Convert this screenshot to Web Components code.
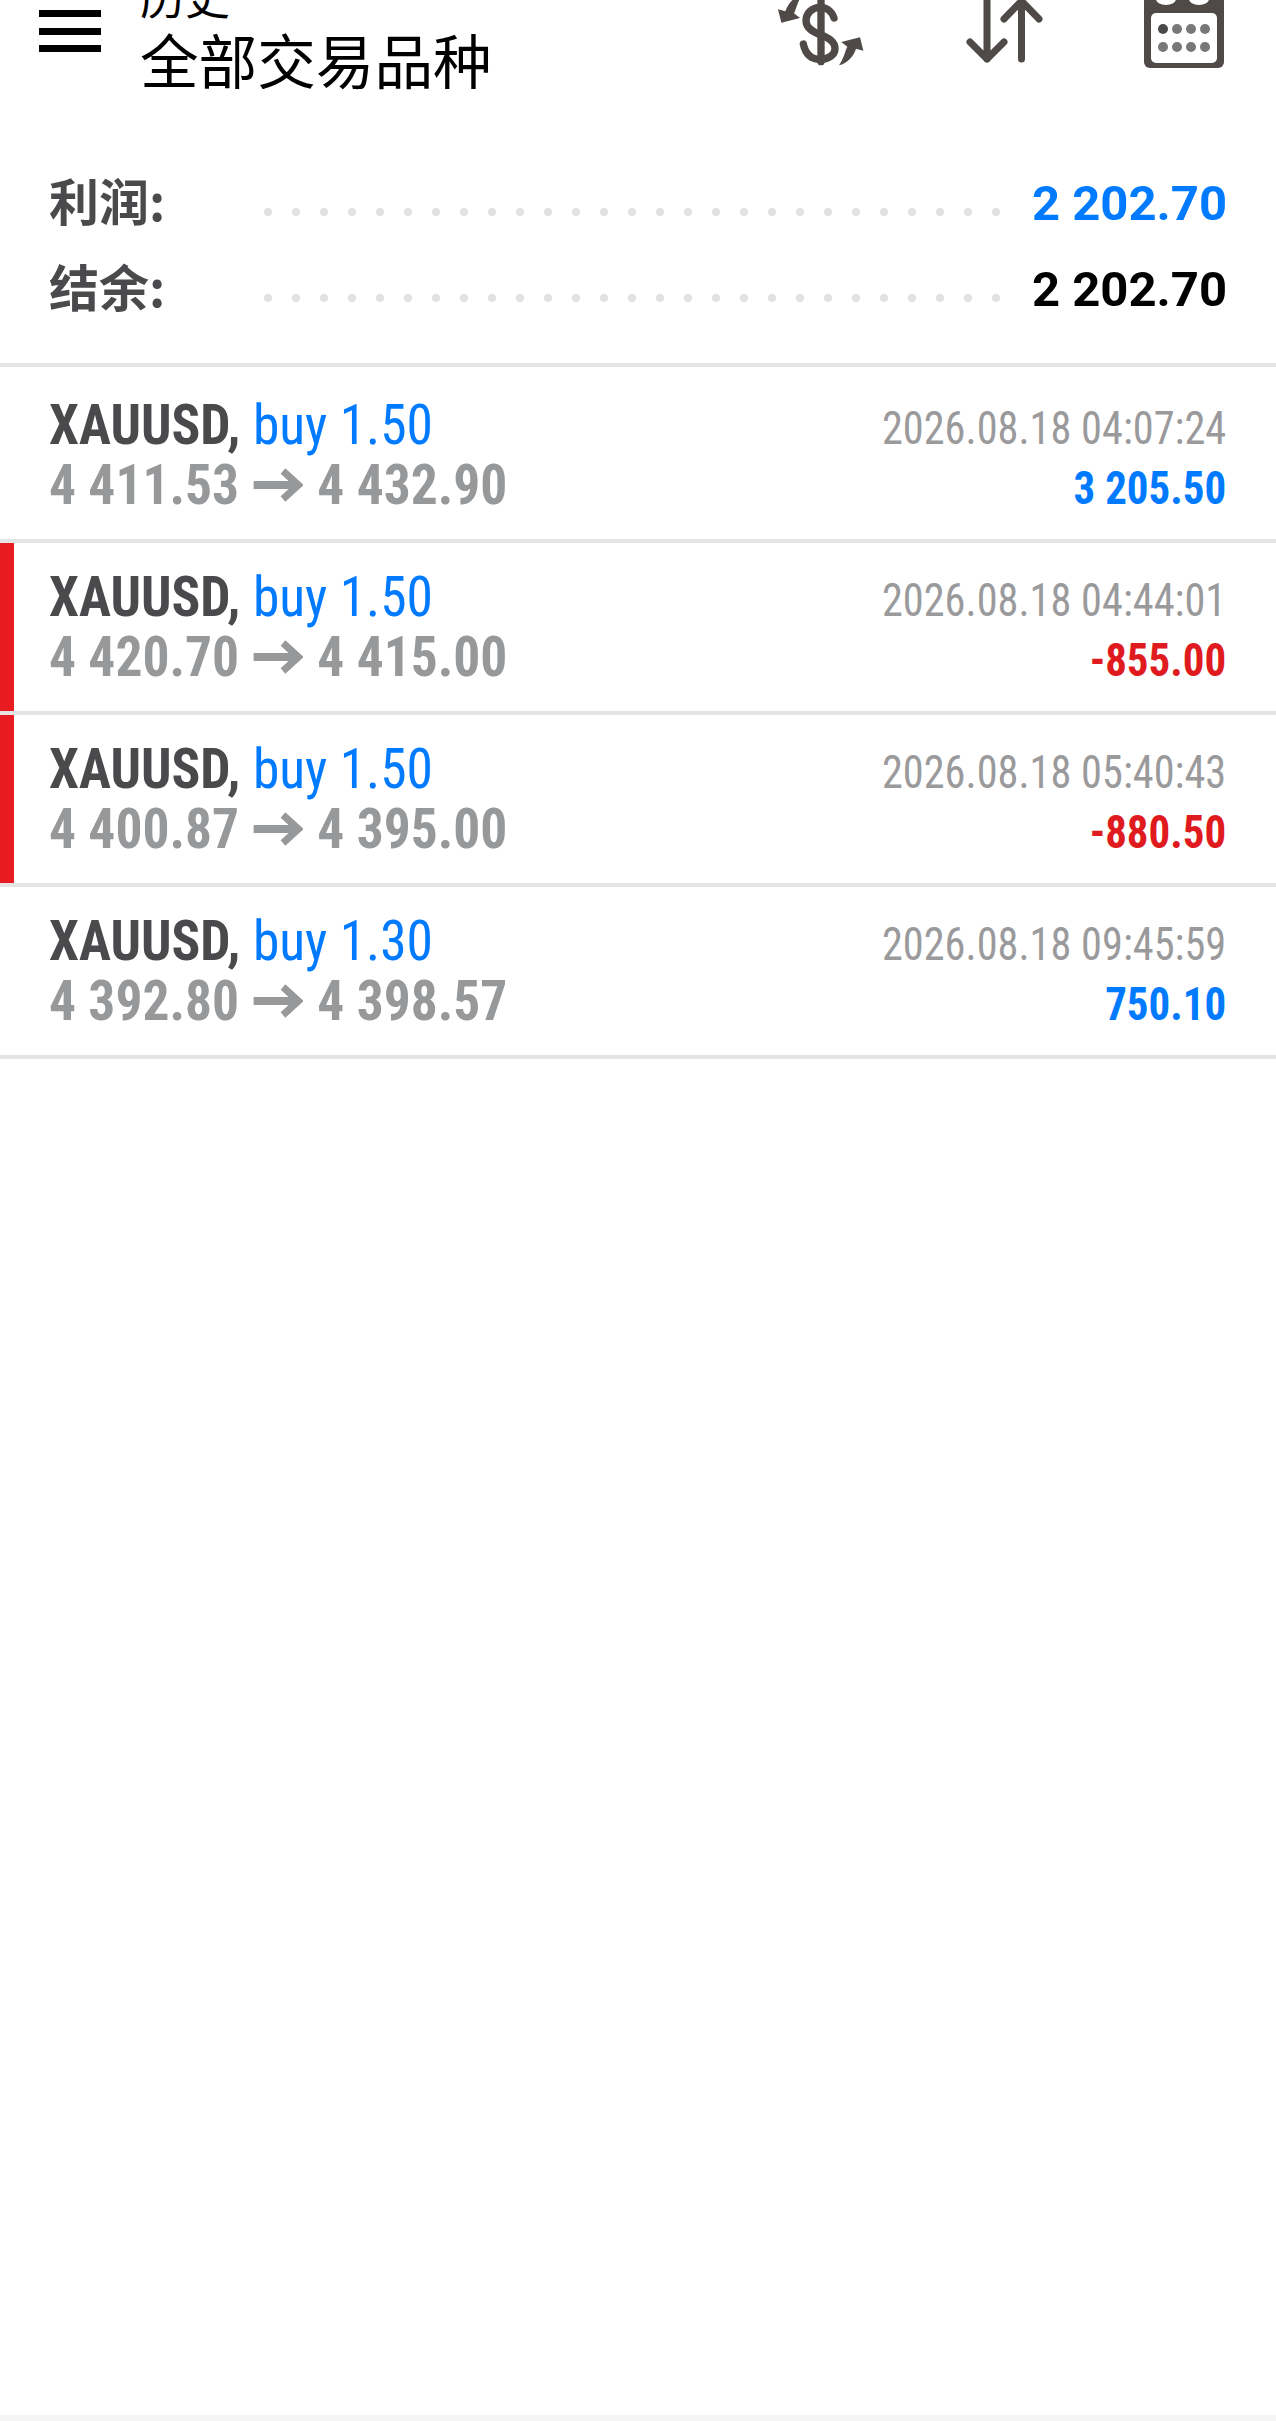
<!doctype html>
<html lang="zh">
<head>
<meta charset="utf-8">
<title>历史</title>
<style>
  html, body { margin: 0; height: 100%; background: #fff; }
  body { display: flex; flex-direction: column; height: 2421px; overflow: hidden; font-family: Roboto, "Noto Sans CJK SC", sans-serif; }
  history-list { flex: 1; }
</style>
</head>
<body>
<app-header></app-header>
<summary-panel>
  <summary-row label="利润:" value="2 202.70" tone="blue"></summary-row>
  <summary-row label="结余:" value="2 202.70"></summary-row>
</summary-panel>
<history-list>
  <trade-row class="first" symbol="XAUUSD," deal="buy 1.50" open="4 411.53" close="4 432.90" time="2026.08.18 04:07:24" profit="3 205.50"></trade-row>
  <trade-row symbol="XAUUSD," deal="buy 1.50" open="4 420.70" close="4 415.00" time="2026.08.18 04:44:01" profit="-855.00" loss></trade-row>
  <trade-row symbol="XAUUSD," deal="buy 1.50" open="4 400.87" close="4 395.00" time="2026.08.18 05:40:43" profit="-880.50" loss></trade-row>
  <trade-row symbol="XAUUSD," deal="buy 1.30" open="4 392.80" close="4 398.57" time="2026.08.18 09:45:59" profit="750.10"></trade-row>
</history-list>
<nav-strip></nav-strip>

<script>
class AppHeader extends HTMLElement {
  constructor() {
    super();
    this.attachShadow({ mode: 'open' }).innerHTML = /*html*/`
      <style>
        :host { display: flex; height: 161px; overflow: hidden; color: #000; font-family: "Noto Sans CJK SC", sans-serif; }
        .menu { margin: 10px 0 0 39px; width: 62px; height: 42px; display: flex; flex-direction: column; justify-content: space-between; }
        .menu i { display: block; height: 7px; background: #000; }
        .titles { margin: -31px 0 0 39px; display: flex; flex-direction: column; }
        .sub { font-size: 45px; line-height: 54px; }
        .main { font-size: 58.6px; line-height: 72px; }
        .icons { margin-left: auto; display: flex; align-items: flex-start; }
        svg { display: block; flex: none; }
        .dollar { margin-right: 95.5px; }
        .sort { margin-right: 91.5px; }
        .cal { margin-right: 51px; }
      </style>
      <div class="menu"><i></i><i></i><i></i></div>
      <div class="titles">
        <span class="sub">历史</span>
        <span class="main">全部交易品种</span>
      </div>
      <div class="icons">
        <svg class="dollar" width="100" height="72" viewBox="0 0 300 216" fill="#4f4a47">
          <path d="M192 54C185 32 168 22 150 22C126 22 108 40 108 62C108 85 130 96 153 105C180 116 195 126 195 146C195 165 175 178 150 178C125 178 107 165 100 132" fill="none" stroke="#4f4a47" stroke-width="22" stroke-linecap="round"/>
          <rect x="142" y="-20" width="22" height="216" rx="11"/>
          <path d="M207 196C222 175 226 150 232 140L214 126L270 112L280 152L258 146C250 170 232 190 207 196Z"/>
          <path d="M207 196C222 175 226 150 232 140L214 126L270 112L280 152L258 146C250 170 232 190 207 196Z" transform="rotate(180 152 90)"/>
        </svg>
        <svg class="sort" width="86" height="72" viewBox="0 0 86 72" fill="none" stroke="#4f4a47" stroke-width="7" stroke-linecap="round" stroke-linejoin="round">
          <path d="M21 -5V59M4 42L21 59L38 42"/>
          <path d="M55.5 -3V59M38 19L55.5 1L73 19"/>
        </svg>
        <svg class="cal" width="82" height="72" viewBox="0 0 82 72">
          <path d="M1 0H81V62a6 6 0 0 1-6 6H7a6 6 0 0 1-6-6Z" fill="#4f4a47"/>
          <rect x="8" y="13" width="66" height="50" rx="5" fill="#fff"/>
          <ellipse cx="23" cy="-1" rx="10" ry="6" fill="#fff"/>
          <ellipse cx="56" cy="-1" rx="10" ry="6" fill="#fff"/>
          <circle cx="20" cy="29" r="5" fill="#4a4a4a"/>
          <g fill="#787878">
            <circle cx="34" cy="29" r="5"/><circle cx="48" cy="29" r="5"/><circle cx="62" cy="29" r="5"/>
            <circle cx="20" cy="47" r="5"/><circle cx="34" cy="47" r="5"/><circle cx="48" cy="47" r="5"/><circle cx="62" cy="47" r="5"/>
          </g>
        </svg>
      </div>
    `;
  }
}

class SummaryPanel extends HTMLElement {
  constructor() {
    super();
    this.attachShadow({ mode: 'open' }).innerHTML = /*html*/`
      <style>
        :host { display: block; height: 206px; box-sizing: border-box; border-bottom: 4px solid #e4e4e4; }
      </style>
      <slot></slot>
    `;
  }
}

class SummaryRow extends HTMLElement {
  constructor() {
    super();
    this.attachShadow({ mode: 'open' });
  }

  connectedCallback() {
    const tone = this.getAttribute('tone') === 'blue' ? '#007aff' : '#000';
    this.shadowRoot.innerHTML = /*html*/`
      <style>
        :host { display: flex; height: 86px; padding: 0 49px 0 49px; align-items: center; }
        .label { width: 215px; flex: none; margin-top: -10px; font: 700 50px/60px "Noto Sans CJK SC", sans-serif; color: #4a4a4d; }
        .dots { width: 738px; height: 8px; flex: none; margin-top: 16px; background: radial-gradient(circle at 4px 4px, #e2e2e2 3.8px, transparent 4.4px) 0 0 / 28px 8px repeat-x; }
        .value { margin-left: auto; font: 700 49px/60px Roboto, sans-serif; color: ${tone}; white-space: nowrap; }
      </style>
      <span class="label">${this.getAttribute('label')}</span>
      <span class="dots"></span>
      <span class="value">${this.getAttribute('value')}</span>
    `;
  }
}

class HistoryList extends HTMLElement {
  constructor() {
    super();
    this.attachShadow({ mode: 'open' }).innerHTML = /*html*/`
      <style>:host { display: block; }</style>
      <slot></slot>
    `;
  }
}

class TradeRow extends HTMLElement {
  constructor() {
    super();
    this.attachShadow({ mode: 'open' });
  }

  connectedCallback() {
    const a = n => this.getAttribute(n);
    const loss = this.hasAttribute('loss');
    this.shadowRoot.innerHTML = /*html*/`
      <style>
        :host { display: flex; box-sizing: border-box; height: 172px; border-bottom: 4px solid #e4e4e4; font-family: Roboto, sans-serif; font-stretch: 75%; white-space: nowrap; }
        :host(.first) { height: 176px; padding-top: 4px; }
        .bar { width: 14px; flex: none; background: ${loss ? '#e81c20' : 'transparent'}; }
        .body { flex: 1; display: flex; justify-content: space-between; padding: 24px 50px 0 35px; }
        .line { height: 60px; line-height: 60px; display: flex; align-items: center; }
        .left { font-size: 56px; transform: scaleX(.955); transform-origin: 0 0; }
        .sym { font-weight: 700; color: #4a4a4d; }
        .deal { color: #007aff; margin-left: 13px; }
        .price { font-weight: 700; color: #97989a; }
        svg { margin: 0 15px; flex: none; }
        .right { margin-top: 3px; text-align: right; }
        .time { font-size: 46px; color: #9a9a9c; justify-content: flex-end; transform: scaleX(.92); transform-origin: 100% 0; }
        .profit { font-size: 46px; font-weight: 700; color: ${loss ? '#e01b20' : '#007aff'}; justify-content: flex-end; transform: scaleX(.934); transform-origin: 100% 0; }
      </style>
      <span class="bar"></span>
      <div class="body">
        <div class="left">
          <div class="line"><span class="sym">${a('symbol')}</span><span class="deal">${a('deal')}</span></div>
          <div class="line price">
            <span>${a('open')}</span>
            <svg width="52" height="34" viewBox="0 0 52 34" fill="none" stroke="#97989a"><path d="M0 17H47" stroke-width="8"/><path d="M31 3L47 17L31 31" stroke-width="7.5"/></svg>
            <span>${a('close')}</span>
          </div>
        </div>
        <div class="right">
          <div class="line time">${a('time')}</div>
          <div class="line profit">${a('profit')}</div>
        </div>
      </div>
    `;
  }
}

class NavStrip extends HTMLElement {
  constructor() {
    super();
    this.attachShadow({ mode: 'open' }).innerHTML = /*html*/`
      <style>:host { display: block; height: 6px; background: #f5f5f5; flex: none; }</style>
    `;
  }
}

customElements.define('app-header', AppHeader);
customElements.define('summary-panel', SummaryPanel);
customElements.define('summary-row', SummaryRow);
customElements.define('history-list', HistoryList);
customElements.define('trade-row', TradeRow);
customElements.define('nav-strip', NavStrip);
</script>
</body>
</html>
